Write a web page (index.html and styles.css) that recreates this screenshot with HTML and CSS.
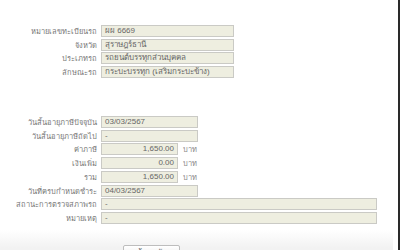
FILE: index.html
```html
<!DOCTYPE html>
<html lang="th">
<head>
  <meta charset="UTF-8" />
  <meta name="viewport" content="width=device-width, initial-scale=1.0"/>
  <title>ข้อมูลภาษีรถ</title>
  <link rel="stylesheet" href="styles.css">
</head>
<body>
  <div class="page">
    <!-- Vehicle info -->
    <div class="section">
      <div class="row">
        <span class="label">หมายเลขทะเบียนรถ</span>
        <span class="field wide">ผผ 6669</span>
      </div>
      <div class="row">
        <span class="label">จังหวัด</span>
        <span class="field wide">สุราษฎร์ธานี</span>
      </div>
      <div class="row">
        <span class="label">ประเภทรถ</span>
        <span class="field wide">รถยนต์บรรทุกส่วนบุคคล</span>
      </div>
      <div class="row">
        <span class="label">ลักษณะรถ</span>
        <span class="field wide">กระบะบรรทุก (เสริมกระบะข้าง)</span>
      </div>
    </div>

    <!-- Tax info -->
    <div class="section tax">
      <div class="row">
        <span class="label">วันสิ้นอายุภาษีปัจจุบัน</span>
        <span class="field date">03/03/2567</span>
      </div>
      <div class="row">
        <span class="label">วันสิ้นอายุภาษีถัดไป</span>
        <span class="field date">-</span>
      </div>
      <div class="row">
        <span class="label">ค่าภาษี</span>
        <span class="field amount">1,650.00</span>
        <span class="unit">บาท</span>
      </div>
      <div class="row">
        <span class="label">เงินเพิ่ม</span>
        <span class="field amount">0.00</span>
        <span class="unit">บาท</span>
      </div>
      <div class="row">
        <span class="label">รวม</span>
        <span class="field amount">1,650.00</span>
        <span class="unit">บาท</span>
      </div>
      <div class="row">
        <span class="label">วันที่ครบกำหนดชำระ</span>
        <span class="field date">04/03/2567</span>
      </div>
      <div class="row">
        <span class="label">สถานะการตรวจสภาพรถ</span>
        <span class="field long">-</span>
      </div>
      <div class="row">
        <span class="label">หมายเหตุ</span>
        <span class="field long">-</span>
      </div>
    </div>

    <!-- Footer with back button -->
    <div class="footer">
      <button class="btn-back">ย้อนกลับ</button>
    </div>
  </div>
</body>
</html>
```

FILE: styles.css
```css
/*
  Global reset and fonts
*/
* {
  box-sizing: border-box;
  margin: 0;
  padding: 0;
}
html, body {
  height: 100%;
}
body {
  background: #ffffff;
  font-family: Tahoma, "Liberation Sans", "DejaVu Sans", sans-serif;
  font-size: 8px;
  color: #666666;
  overflow: hidden;
  border-right: 2px solid #2a2a2a;
}
/*
  Page wrapper
*/
.page {
  padding-top: 25px;
}
/*
  Form sections
*/
.section {
  display: flex;
  flex-direction: column;
  gap: 1.7px;
}
.section.tax {
  margin-top: 38px;
}
.row {
  display: flex;
  align-items: center;
  height: 12px;
}
.label {
  width: 97px;
  margin-right: 4px;
  text-align: right;
  font-size: 7.5px;
  color: #777777;
  white-space: nowrap;
}
/*
  Read-only value boxes
*/
.field {
  height: 12px;
  line-height: 10px;
  padding: 0 3px;
  background-color: #eeeee0;
  border: 1px solid #cacac5;
  color: #666666;
  white-space: nowrap;
  overflow: hidden;
}
.field.wide {
  width: 133px;
}
.field.date {
  width: 97px;
}
.field.amount {
  width: 77px;
  text-align: right;
}
.field.long {
  width: 276px;
}
.unit {
  margin-left: 5px;
  font-size: 7.5px;
  color: #888888;
}
/*
  Footer band
*/
.footer {
  margin-top: 6px;
  height: 30px;
  width: 393px;
  background: linear-gradient(to bottom, #ffffff 0%, #f2f2f2 60%);
  padding-top: 15px;
  padding-left: 123px;
}
.btn-back {
  width: 57px;
  height: 16px;
  font-family: inherit;
  font-size: 8px;
  color: #555555;
  background: linear-gradient(to bottom, #ffffff, #e8e8e8);
  border: 1px solid #bdbdbd;
  border-radius: 2px;
  cursor: pointer;
}
```
